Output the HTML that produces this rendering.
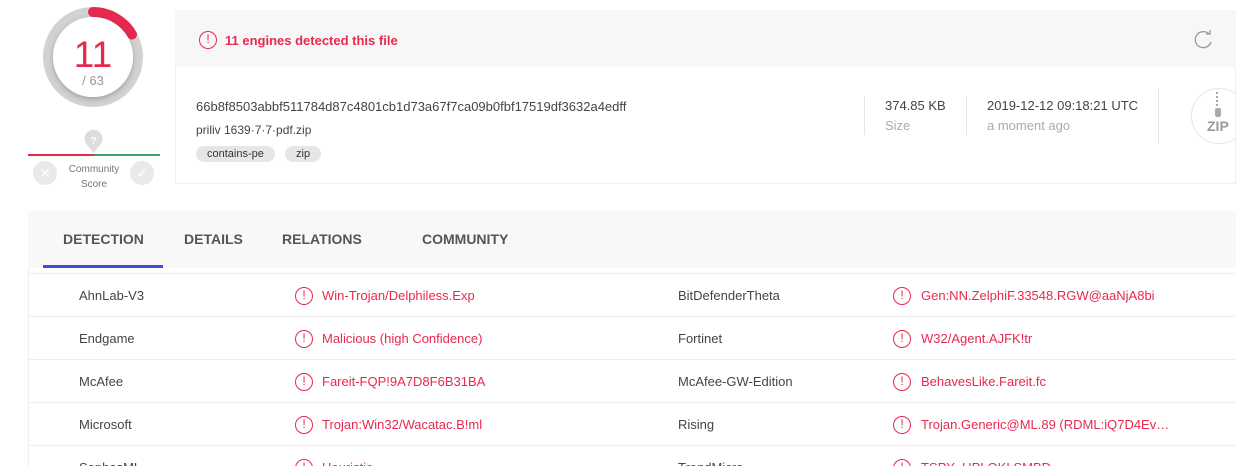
<!DOCTYPE html>
<html style="width:1236px;height:466px;overflow:hidden"><head><meta charset="utf-8"><style>
*{box-sizing:border-box;margin:0;padding:0}
body{width:1236px;height:466px;overflow:hidden;background:#fff;font-family:"Liberation Sans",sans-serif;color:#444;position:relative}
.a{position:absolute}
.red{color:#e8294f}
.ic{position:absolute;width:18px;height:18px;border:1.5px solid #e8294f;border-radius:50%;color:#e8294f;font-size:12px;line-height:15px;text-align:center}
.row{position:absolute;left:28px;right:0;height:43px;border-bottom:1px solid #eee;font-size:13px}
.row span{position:absolute;top:14px}
.tag{position:absolute;top:146px;height:16px;background:#e6e6e6;border-radius:8px;font-size:11px;line-height:16px;padding:0 11px;color:#333}
</style></head><body>
<svg class="a" style="left:33px;top:0" width="120" height="125">
<defs><filter id="s"><feDropShadow dx="0" dy="2" stdDeviation="3" flood-opacity="0.25"/></filter></defs>
<circle cx="60" cy="57" r="45" fill="none" stroke="#d2d2d2" stroke-width="10"/>
<path d="M60 12 A45 45 0 0 1 99 34.5" fill="none" stroke="#e8294f" stroke-width="10" stroke-linecap="round"/>
<circle cx="60" cy="57" r="40" fill="#fff" filter="url(#s)"/>
<text x="60" y="67" text-anchor="middle" font-size="37" fill="#e8294f" font-family="Liberation Sans">11</text>
<text x="60" y="85" text-anchor="middle" font-size="13" fill="#999" font-family="Liberation Sans">/ 63</text>
</svg>
<svg class="a" style="left:83px;top:129px" width="21" height="25"><path d="M10.5 24 L4 16 A9 9 0 1 1 17 16 Z" fill="#ddd"/><text x="10.5" y="15" text-anchor="middle" font-size="10" font-weight="bold" fill="#fff" font-family="Liberation Sans">?</text></svg>
<div class="a" style="left:28px;top:154px;width:66px;height:2px;background:#e8294f"></div>
<div class="a" style="left:94px;top:154px;width:66px;height:2px;background:#3aa56b"></div>
<div class="a" style="left:33px;top:161px;width:24px;height:24px;border-radius:50%;background:#e9e9e9;color:#fff;text-align:center;line-height:24px;font-size:14px">✕</div>
<div class="a" style="left:130px;top:161px;width:24px;height:24px;border-radius:50%;background:#e9e9e9;color:#fff;text-align:center;line-height:24px;font-size:14px">✓</div>
<div class="a" style="left:58px;top:162px;width:72px;text-align:center;font-size:10px;line-height:15px;color:#777">Community<br>Score</div>

<div class="a" style="left:175px;top:10px;width:1061px;height:57px;background:#f7f7f7"></div>
<div class="a" style="left:175px;top:67px;width:1061px;height:117px;border:1px solid #f0f0f0;border-top:none"></div>
<div class="ic" style="left:199px;top:31px">!</div>
<div class="a red" style="left:225px;top:33px;font-size:13px;font-weight:bold">11 engines detected this file</div>
<svg class="a" style="left:1192px;top:28px" width="24" height="22"><path d="M17 6 A8 8 0 1 0 19 14" fill="none" stroke="#999" stroke-width="1.3"/><path d="M14 6 L18 6 L18 2" fill="none" stroke="#999" stroke-width="1.3"/></svg>
<div class="a" style="left:196px;top:99px;font-size:13px;color:#444">66b8f8503abbf511784d87c4801cb1d73a67f7ca09b0fbf17519df3632a4edff</div>
<div class="a" style="left:196px;top:123px;font-size:12px;color:#444">priliv 1639·7·7·pdf.zip</div>
<div class="tag" style="left:196px">contains-pe</div>
<div class="tag" style="left:285px">zip</div>
<div class="a" style="left:864px;top:96px;width:1px;height:39px;background:#e5e5e5"></div>
<div class="a" style="left:966px;top:96px;width:1px;height:39px;background:#e5e5e5"></div>
<div class="a" style="left:1158px;top:88px;width:1px;height:56px;background:#e5e5e5"></div>
<div class="a" style="left:885px;top:98px;font-size:13px">374.85 KB</div>
<div class="a" style="left:885px;top:118px;font-size:13px;color:#aaa">Size</div>
<div class="a" style="left:987px;top:98px;font-size:13px">2019-12-12 09:18:21 UTC</div>
<div class="a" style="left:987px;top:118px;font-size:13px;color:#aaa">a moment ago</div>
<div class="a" style="left:1191px;top:88px;width:56px;height:56px;border-radius:50%;border:1px solid #e5e5e5"></div>
<div class="a" style="left:1216px;top:92px;width:4px;height:14px;border-left:2px dotted #aaa"></div>
<div class="a" style="left:1215px;top:108px;width:6px;height:9px;background:#aaa;border-radius:2px"></div>
<div class="a" style="left:1207px;top:118px;font-size:14px;font-weight:bold;color:#999">ZIP</div>

<div class="a" style="left:28px;top:211px;width:1208px;height:57px;background:#f8f8f8"></div>
<div class="a" style="left:43px;top:265px;width:120px;height:3px;background:#3b50e0"></div>
<div class="a" style="top:231px;left:63px;font-size:14px;font-weight:bold;color:#555">DETECTION</div>
<div class="a" style="top:231px;left:184px;font-size:14px;font-weight:bold;color:#555">DETAILS</div>
<div class="a" style="top:231px;left:282px;font-size:14px;font-weight:bold;color:#555">RELATIONS</div>
<div class="a" style="top:231px;left:422px;font-size:14px;font-weight:bold;color:#555">COMMUNITY</div>
<div class="a" style="left:28px;top:268px;width:1px;height:198px;background:#eee"></div>
<div class="a" style="left:28px;top:273px;right:0;height:1px;background:#eee"></div>

<div class="row" style="top:274px"><span style="left:51px">AhnLab-V3</span><div class="ic" style="left:267px;top:13px">!</div><span class="red" style="left:294px">Win-Trojan/Delphiless.Exp</span><span style="left:650px">BitDefenderTheta</span><div class="ic" style="left:865px;top:13px">!</div><span class="red" style="left:893px">Gen:NN.ZelphiF.33548.RGW@aaNjA8bi</span></div>
<div class="row" style="top:317px"><span style="left:51px">Endgame</span><div class="ic" style="left:267px;top:13px">!</div><span class="red" style="left:294px">Malicious (high Confidence)</span><span style="left:650px">Fortinet</span><div class="ic" style="left:865px;top:13px">!</div><span class="red" style="left:893px">W32/Agent.AJFK!tr</span></div>
<div class="row" style="top:360px"><span style="left:51px">McAfee</span><div class="ic" style="left:267px;top:13px">!</div><span class="red" style="left:294px">Fareit-FQP!9A7D8F6B31BA</span><span style="left:650px">McAfee-GW-Edition</span><div class="ic" style="left:865px;top:13px">!</div><span class="red" style="left:893px">BehavesLike.Fareit.fc</span></div>
<div class="row" style="top:403px"><span style="left:51px">Microsoft</span><div class="ic" style="left:267px;top:13px">!</div><span class="red" style="left:294px">Trojan:Win32/Wacatac.B!ml</span><span style="left:650px">Rising</span><div class="ic" style="left:865px;top:13px">!</div><span class="red" style="left:893px">Trojan.Generic@ML.89 (RDML:iQ7D4Ev…</span></div>
<div class="row" style="top:446px"><span style="left:51px">SophosML</span><div class="ic" style="left:267px;top:13px">!</div><span class="red" style="left:294px">Heuristic</span><span style="left:650px">TrendMicro</span><div class="ic" style="left:865px;top:13px">!</div><span class="red" style="left:893px">TSPY_UPLOKI.SMBD</span></div>
</body></html>
